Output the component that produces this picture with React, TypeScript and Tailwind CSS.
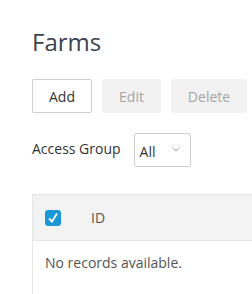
import React from "react";

export default function App() {
  return (
    <div
      className="w-[252px] h-[294px] overflow-hidden bg-white pl-[32px]"
      style={{ fontFamily: '"Open Sans", sans-serif' }}
    >
      <h1 className="pt-[26px] text-[24px] leading-[32px] text-[#3a4250] font-normal">Farms</h1>
      <div className="mt-[21px] flex gap-[10px] w-[300px]">
        <button className="w-[60px] h-[34px] border border-[#cfcfcf] rounded-[2px] bg-white text-[14px] text-[#333]">
          Add
        </button>
        <button className="w-[59px] h-[34px] rounded-[2px] bg-[#f2f2f2] text-[14px] text-[#a5a5a5]">
          Edit
        </button>
        <button className="w-[76px] h-[34px] rounded-[2px] bg-[#f2f2f2] text-[14px] text-[#a5a5a5]">
          Delete
        </button>
      </div>
      <div className="mt-[20px] flex items-center gap-[13px]">
        <span className="text-[14px] text-[#333] -mt-[4px]">Access Group</span>
        <div className="w-[57px] h-[34px] border border-[#cfcfcf] rounded-[2px] flex items-center pl-[5px] pr-[10px] justify-between">
          <span className="text-[14px] text-[#333] mt-[3px]">All</span>
          <svg width="8" height="5" viewBox="0 0 8 5" className="-mt-[2px]">
            <path d="M0.5 0.5 L4 4 L7.5 0.5" fill="none" stroke="#a0a0a0" strokeWidth="1" />
          </svg>
        </div>
      </div>
      <div className="mt-[27px] w-[300px] border-t border-l border-[#e6e6e6]">
        <div className="h-[46px] bg-[#f3f3f3] border-b border-[#e6e6e6] flex items-center">
          <div className="ml-[12px] w-[16px] h-[16px] rounded-[3px] bg-[#1a97d5] flex items-center justify-center">
            <svg width="12" height="12" viewBox="0 0 12 12">
              <path d="M2 6.5 L5 9.5 L10 1.5" fill="none" stroke="#fff" strokeWidth="1.8" strokeLinejoin="round" />
            </svg>
          </div>
          <span className="ml-[30px] text-[14px] text-[#555]">ID</span>
        </div>
        <div className="h-[60px] pl-[12px] pt-[11px] text-[14px] text-[#555]">No records available.</div>
      </div>
    </div>
  );
}
